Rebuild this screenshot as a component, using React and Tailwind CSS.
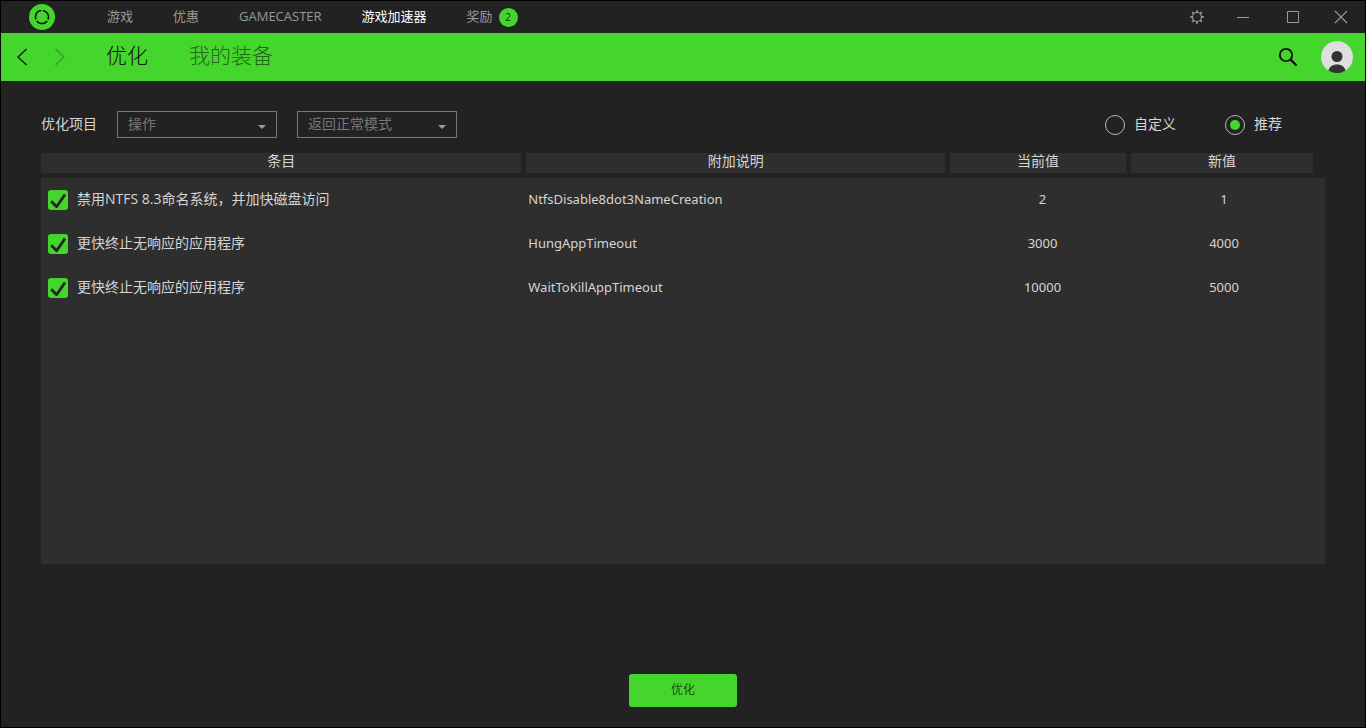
import { useState } from "react";

const NAV = ["游戏", "优惠", "GAMECASTER", "游戏加速器"];

const ROWS = [
  { name: "禁用NTFS 8.3命名系统，并加快磁盘访问", note: "NtfsDisable8dot3NameCreation", current: "2", next: "1" },
  { name: "更快终止无响应的应用程序", note: "HungAppTimeout", current: "3000", next: "4000" },
  { name: "更快终止无响应的应用程序", note: "WaitToKillAppTimeout", current: "10000", next: "5000" },
];

function Logo() {
  return (
    <svg viewBox="0 0 26 26" className="size-[26px]" aria-hidden="true">
      <circle cx="13" cy="13" r="13" fill="#44d62c" />
      <circle
        cx="13"
        cy="13"
        r="6.5"
        fill="none"
        stroke="#111"
        strokeWidth="1.6"
        pathLength="60"
        strokeDasharray="17.5 2.5"
        transform="rotate(-82 13 13)"
      />
    </svg>
  );
}

function GearIcon() {
  const angles = [0, 45, 90, 135, 180, 225, 270, 315];
  return (
    <svg viewBox="0 0 14 14" className="size-3.5" fill="none" stroke="currentColor" aria-hidden="true">
      <circle cx="7" cy="7" r="4.5" strokeWidth="1.2" />
      {angles.map((a) => (
        <path key={a} d="M7 2.4V0.2" strokeWidth="1.8" transform={`rotate(${a} 7 7)`} />
      ))}
    </svg>
  );
}

function TopBar() {
  return (
    <header className="flex h-8 items-center pl-7 pr-[17px] text-[13px] text-[#999]">
      <a href="#home" aria-label="主页">
        <Logo />
      </a>
      <nav className="ml-[52px] flex items-center gap-10 leading-5">
        {NAV.map((item) => (
          <a key={item} href="#nav" className={item === "游戏加速器" ? "pb-0.5 text-white" : "pb-0.5"}>
            {item}
          </a>
        ))}
        <a href="#rewards" className="flex items-center gap-1.5">
          <span className="pb-0.5">奖励</span>
          <span className="flex size-[19px] items-center justify-center rounded-full bg-[#44d62c] text-[10px] text-[#222]">
            2
          </span>
        </a>
      </nav>
      <div className="ml-auto flex items-center">
        <button type="button" aria-label="设置">
          <GearIcon />
        </button>
        <button type="button" aria-label="最小化" className="ml-8">
          <svg viewBox="0 0 14 14" className="size-3.5" aria-hidden="true">
            <path d="M1 7.5h12" stroke="currentColor" />
          </svg>
        </button>
        <button type="button" aria-label="最大化" className="ml-9">
          <svg viewBox="0 0 14 14" className="size-3.5" aria-hidden="true">
            <path d="M1.5 1.5h11v11h-11z" fill="none" stroke="currentColor" />
          </svg>
        </button>
        <button type="button" aria-label="关闭" className="ml-[34px]">
          <svg viewBox="0 0 14 14" className="size-3.5" aria-hidden="true">
            <path d="M1 1l12 12M13 1L1 13" fill="none" stroke="currentColor" strokeWidth="1.1" />
          </svg>
        </button>
      </div>
    </header>
  );
}

function TitleBar() {
  return (
    <div className="flex h-12 items-center bg-[#44d62c] pl-[15px] pr-3 text-[#1a3a14]">
      <button type="button" aria-label="后退">
        <svg viewBox="0 0 12 18" className="h-[18px] w-3" fill="none" stroke="#151515" strokeWidth="1.3" aria-hidden="true">
          <path d="M10.5 1L2 9l8.500 8" />
        </svg>
      </button>
      <button type="button" aria-label="前进" className="ml-[26px]">
        <svg viewBox="0 0 12 18" className="h-[18px] w-3" fill="none" stroke="#359e25" strokeWidth="1.3" aria-hidden="true">
          <path d="M1.500 1L10 9l-8.500 8" />
        </svg>
      </button>
      <nav className="ml-10 flex gap-[41px] pb-1 text-[21px] leading-7 font-light">
        <a href="#optimize" className="text-[#111]">
          优化
        </a>
        <a href="#gear" className="text-[#226a18]">
          我的装备
        </a>
      </nav>
      <button type="button" aria-label="搜索" className="ml-auto">
        <svg viewBox="0 0 20 20" className="size-5" fill="none" stroke="#0c0c0c" aria-hidden="true">
          <circle cx="8" cy="8" r="6.200" strokeWidth="1.800" />
          <path d="M12.400 12.400L18.500 18.500" strokeWidth="2.200" />
        </svg>
      </button>
      <button type="button" aria-label="个人资料" className="ml-[23px]">
        <svg viewBox="0 0 32 32" className="size-8" aria-hidden="true">
          <circle cx="16" cy="16" r="16" fill="#dfdfdf" />
          <circle cx="16" cy="15.500" r="5.500" fill="#333" />
          <path d="M7.500 29.500C8.500 25.500 12 23.500 16 23.500S23.500 25.500 24.500 29.500A16 16 0 0 1 7.500 29.500Z" fill="#333" />
        </svg>
      </button>
    </div>
  );
}

function Dropdown({ label, option }) {
  return (
    <div className="grid w-40 items-center">
      <select
        aria-label={label}
        className="col-start-1 row-start-1 h-[27px] w-full appearance-none border border-[#777] bg-transparent px-2.5 pb-0.5 text-sm leading-5 text-[#777]"
      >
        <option>{option}</option>
      </select>
      <svg
        viewBox="0 0 8 4"
        className="pointer-events-none col-start-1 row-start-1 mt-1 mr-[11px] h-1 w-2 justify-self-end"
        aria-hidden="true"
      >
        <path d="M0 0h8L4 4z" fill="#999" />
      </svg>
    </div>
  );
}

function Radio({ label, checked, onChange }) {
  return (
    <label className="flex items-center gap-[9px]">
      <input
        type="radio"
        name="mode"
        checked={checked}
        onChange={onChange}
        className="grid size-5 appearance-none place-items-center rounded-full border border-[#bbb] before:size-2.5 before:rounded-full checked:before:bg-[#44d62c]"
      />
      <span className="pb-0.5">{label}</span>
    </label>
  );
}

function ItemCheckbox({ label }) {
  return (
    <label className="flex items-center gap-[9px] pl-[7px]">
      <span className="grid size-5 shrink-0">
        <input
          type="checkbox"
          defaultChecked
          className="peer col-start-1 row-start-1 size-5 appearance-none rounded-[3px] border border-[#777] checked:border-0 checked:bg-[#44d62c]"
        />
        <svg
          viewBox="0 0 20 20"
          className="pointer-events-none col-start-1 row-start-1 hidden size-5 peer-checked:block"
          fill="none"
          stroke="#222"
          strokeWidth="2.8"
          aria-hidden="true"
        >
          <path d="M3.200 11.300L8.600 16.800L17 4.500" strokeLinejoin="round" />
        </svg>
      </span>
      <span className="pb-0.5">{label}</span>
    </label>
  );
}

function HeaderCell({ children, last }) {
  return (
    <th scope="col" className={last ? "p-0 pr-3 pb-[5px] font-normal" : "p-0 pr-[5px] pb-[5px] font-normal"}>
      <div className="h-5 bg-[#2e2e2e] leading-4">{children}</div>
    </th>
  );
}

export default function App() {
  const [mode, setMode] = useState("推荐");
  return (
    <div className="flex min-h-screen flex-col border border-black bg-[#222] font-['Open_Sans','Noto_Sans_CJK_SC',sans-serif] text-sm text-[#d5d5d5]">
      <TopBar />
      <TitleBar />
      <main className="flex flex-1 flex-col px-10 pt-[30px] pb-5">
        <div className="flex h-[27px] items-center pr-[43px]">
          <span className="pb-0.5 leading-5">优化项目</span>
          <div className="ml-5 flex gap-5">
            <Dropdown label="优化项目" option="操作" />
            <Dropdown label="模式" option="返回正常模式" />
          </div>
          <div className="ml-auto flex gap-[49px] leading-5">
            {["自定义", "推荐"].map((m) => (
              <Radio key={m} label={m} checked={mode === m} onChange={() => setMode(m)} />
            ))}
          </div>
        </div>

        <div className="mt-[15px] flex flex-1 flex-col">
          <table className="w-full table-fixed border-collapse">
            <colgroup>
              <col />
              <col className="w-[33%]" />
              <col className="w-[181px]" />
              <col className="w-[194px]" />
            </colgroup>
            <thead>
              <tr>
                <HeaderCell>条目</HeaderCell>
                <HeaderCell>附加说明</HeaderCell>
                <HeaderCell>当前值</HeaderCell>
                <HeaderCell last>新值</HeaderCell>
              </tr>
            </thead>
            <tbody className="bg-[#2e2e2e]">
              {ROWS.map((row) => (
                <tr key={row.note} className="h-11 font-['Noto_Sans','Noto_Sans_CJK_SC',sans-serif]">
                  <td className="p-0 font-['Open_Sans','Noto_Sans_CJK_SC',sans-serif]">
                    <ItemCheckbox label={row.name} />
                  </td>
                  <td className="p-0 pb-0.5 pl-0.5 text-[13px]">{row.note}</td>
                  <td className="p-0 pb-0.5 pl-1 text-center text-[13px]">{row.current}</td>
                  <td className="p-0 pr-2 pb-0.5 text-center text-[13px]">{row.next}</td>
                </tr>
              ))}
            </tbody>
          </table>
          <div className="flex-1 bg-[#2e2e2e]" />
        </div>

        <button
          type="button"
          className="mt-[110px] h-[33px] w-[108px] self-center rounded-[3px] bg-[#44d62c] pb-0.5 text-xs text-[#1c4a14]"
        >
          优化
        </button>
      </main>
    </div>
  );
}
